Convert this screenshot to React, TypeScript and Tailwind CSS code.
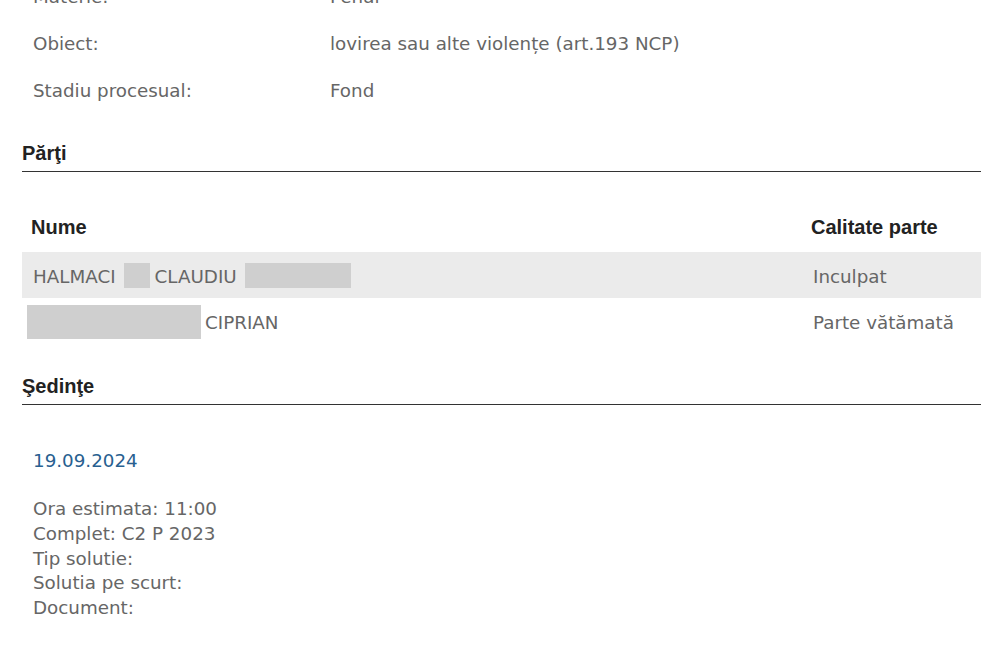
const body = "font-['Tahoma','DejaVu_Sans',sans-serif]";
const heading = "font-['Liberation_Sans',Arial,sans-serif] text-[20px] font-bold text-[#222]";

const InfoRow = ({ label, value }: { label: string; value: string }) => (
  <div className="grid h-[47px] grid-cols-[297px_1fr] items-center pl-[33px] text-[18.3px] text-[#666]">
    <span>{label}</span>
    <span>{value}</span>
  </div>
);

const SectionTitle = ({ title }: { title: string }) => (
  <h3 className={`border-b border-[#333] pb-[6px] leading-[24px] ${heading}`}>{title}</h3>
);

const Redacted = ({ className }: { className: string }) => (
  <span className={`inline-block shrink-0 bg-[#cfcfcf] ${className}`} />
);

export default function App() {
  return (
    <div className={`min-h-[665px] w-[981px] overflow-hidden bg-white ${body}`}>
      <div className="-mt-[27px]">
        <InfoRow label="Materie:" value="Penal" />
        <InfoRow label="Obiect:" value="lovirea sau alte violențe (art.193 NCP)" />
        <InfoRow label="Stadiu procesual:" value="Fond" />
      </div>

      <div className="pl-[22px]">
        <div className="mt-[27px]">
          <SectionTitle title="Părţi" />
        </div>

        <div className="mt-[39px]">
          <div className={`grid h-[32px] grid-cols-[789px_1fr] items-center ${heading}`}>
            <span className="pl-[9px]">Nume</span>
            <span>Calitate parte</span>
          </div>
          <div className="mt-[9px] grid h-[46px] grid-cols-[789px_1fr] items-center bg-[#ebebeb] text-[18.3px] text-[#666]">
            <span className="flex items-center pl-[11px]">
              <span className="pt-[3px]">HALMACI</span>
              <Redacted className="ml-[8px] h-[25px] w-[26px]" />
              <span className="ml-[5px] pt-[3px]">CLAUDIU</span>
              <Redacted className="ml-[8px] h-[25px] w-[106px]" />
            </span>
            <span className="pl-[2px] pt-[3px]">Inculpat</span>
          </div>
          <div className="grid h-[47px] grid-cols-[789px_1fr] items-center text-[18.3px] text-[#666]">
            <span className="flex items-center pl-[5px]">
              <Redacted className="h-[34px] w-[174px] bg-[#c9c9c9]" />
              <span className="ml-[4px] pt-[2px]">CIPRIAN</span>
            </span>
            <span className="pl-[2px] pt-[2px]">Parte vătămată</span>
          </div>
        </div>

        <div className="mt-[29px]">
          <SectionTitle title="Şedinţe" />
        </div>
      </div>

      <div className="pl-[33px] text-[18.3px] text-[#666]">
        <div className="mt-[44px] leading-[24px] text-[#286090]">19.09.2024</div>
        <div className="mt-[24px] leading-[24.75px]">
          <div>Ora estimata: 11:00</div>
          <div>Complet: C2 P 2023</div>
          <div>Tip solutie:</div>
          <div>Solutia pe scurt:</div>
          <div>Document:</div>
        </div>
      </div>
    </div>
  );
}
